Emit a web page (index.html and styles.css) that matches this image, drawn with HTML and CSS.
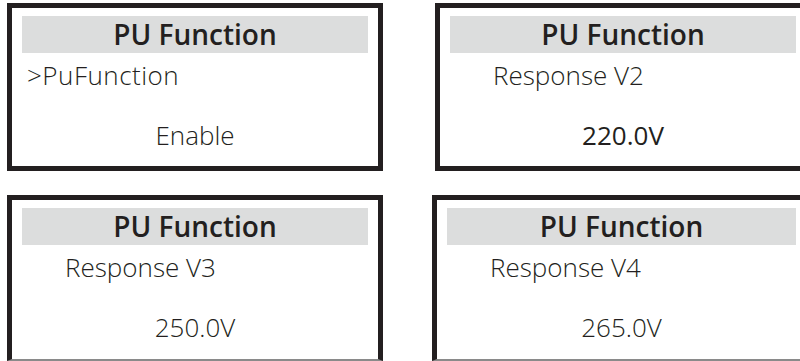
FILE: index.html
```html
<!DOCTYPE html>
<html lang="en">
<head>
  <meta charset="UTF-8">
  <meta name="viewport" content="width=device-width, initial-scale=1.0">
  <title>PU Function</title>
  <link rel="stylesheet" href="styles.css">
</head>
<body>
  <div class="screens">
    <div class="screen">
      <div class="screen-title">PU Function</div>
      <div class="screen-label first">&gt;PuFunction</div>
      <div class="screen-value">Enable</div>
    </div>
    <div class="screen">
      <div class="screen-title">PU Function</div>
      <div class="screen-label">Response V2</div>
      <div class="screen-value strong">220.0V</div>
    </div>
    <div class="screen cut">
      <div class="screen-title">PU Function</div>
      <div class="screen-label">Response V3</div>
      <div class="screen-value">250.0V</div>
    </div>
    <div class="screen cut shift">
      <div class="screen-title">PU Function</div>
      <div class="screen-label">Response V4</div>
      <div class="screen-value">265.0V</div>
    </div>
  </div>
</body>
</html>
```

FILE: styles.css
```css
body {
  margin: 0;
  background-color: #fff;
  font-family: 'Open Sans', sans-serif;
  color: #231f20;
  overflow: hidden;
  height: 361px;
}

.screens {
  display: grid;
  grid-template-columns: 376px 376px;
  grid-template-rows: 168px 166px;
  column-gap: 52px;
  row-gap: 24px;
  padding: 3px 0 0 7px;
}

.screen {
  border: 5px solid #231f20;
  padding: 8px 10px 0 10px;
  box-sizing: border-box;
}

.screen.cut {
  border-bottom: 2px solid #8a8a8a;
}

.screen.shift {
  margin-left: -3px;
}

.screen-title {
  background-color: #dcdddd;
  height: 37px;
  line-height: 37px;
  text-align: center;
  font-size: 28px;
  font-weight: 600;
}

.screen-label {
  margin-top: 7px;
  padding-left: 43px;
  font-size: 26px;
  font-weight: 300;
  line-height: 30px;
}

.screen-label.first {
  padding-left: 5px;
  letter-spacing: 0.5px;
}

.screen-value {
  margin-top: 30px;
  text-align: center;
  font-size: 26px;
  font-weight: 300;
  line-height: 30px;
}

.screen-value.strong {
  font-weight: 400;
}
```
